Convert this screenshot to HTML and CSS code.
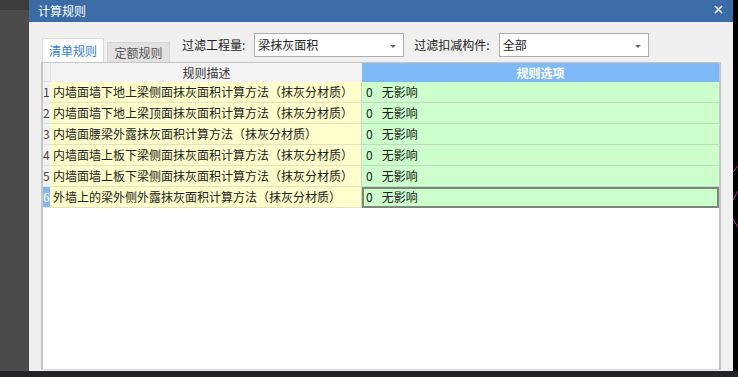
FILE: index.html
```html
<!DOCTYPE html>
<html lang="zh-CN">
<head>
    <meta charset="UTF-8">
    <title>计算规则</title>
    <link rel="stylesheet" href="styles.css">
</head>
<body>
    <div class="screen">
        <div class="main">
            <div class="desk-left"></div>

            <div class="dialog">
                <div class="titlebar">
                    <span class="title">计算规则</span>
                    <svg class="close" width="9" height="9" viewBox="0 0 9 9">
                        <path d="M1 1 L8 8 M8 1 L1 8" stroke="#fff" stroke-width="1.6" fill="none"/>
                    </svg>
                </div>

                <div class="dlg-body">
                    <div class="toolbar">
                        <div class="tabs">
                            <div class="tab active">清单规则</div>
                            <div class="tab">定额规则</div>
                        </div>
                        <div class="filter first">
                            <span class="filter-label">过滤工程量:</span>
                            <div class="combo">梁抹灰面积<span class="arrow"></span></div>
                        </div>
                        <div class="filter">
                            <span class="filter-label">过滤扣减构件:</span>
                            <div class="combo">全部<span class="arrow"></span></div>
                        </div>
                    </div>

                    <div class="grid">
                        <div class="grid-row head">
                            <div class="rh"></div>
                            <div class="hd-desc">规则描述</div>
                            <div class="hd-opt">规则选项</div>
                        </div>
                        <div class="grid-row">
                            <div class="rh">1</div>
                            <div class="desc">内墙面墙下地上梁侧面抹灰面积计算方法（抹灰分材质）</div>
                            <div class="opt">0<span class="opt-text">无影响</span></div>
                        </div>
                        <div class="grid-row">
                            <div class="rh">2</div>
                            <div class="desc">内墙面墙下地上梁顶面抹灰面积计算方法（抹灰分材质）</div>
                            <div class="opt">0<span class="opt-text">无影响</span></div>
                        </div>
                        <div class="grid-row">
                            <div class="rh">3</div>
                            <div class="desc">内墙面腰梁外露抹灰面积计算方法（抹灰分材质）</div>
                            <div class="opt">0<span class="opt-text">无影响</span></div>
                        </div>
                        <div class="grid-row">
                            <div class="rh">4</div>
                            <div class="desc">内墙面墙上板下梁侧面抹灰面积计算方法（抹灰分材质）</div>
                            <div class="opt">0<span class="opt-text">无影响</span></div>
                        </div>
                        <div class="grid-row">
                            <div class="rh">5</div>
                            <div class="desc">内墙面墙上板下梁侧面抹灰面积计算方法（抹灰分材质）</div>
                            <div class="opt">0<span class="opt-text">无影响</span></div>
                        </div>
                        <div class="grid-row current">
                            <div class="rh">6</div>
                            <div class="desc">外墙上的梁外侧外露抹灰面积计算方法（抹灰分材质）</div>
                            <div class="opt">0<span class="opt-text">无影响</span></div>
                        </div>
                    </div>
                </div>
            </div>

            <div class="desk-right">
                <svg width="5" height="371" viewBox="0 0 5 371">
                    <path d="M0 172 L5 166" stroke="#b0309a" stroke-width="1"/>
                    <path d="M0 200 L5 191" stroke="#b0309a" stroke-width="1"/>
                    <path d="M0 219 L5 227" stroke="#b0309a" stroke-width="1"/>
                </svg>
            </div>
        </div>
        <div class="taskbar"></div>
    </div>
</body>
</html>
```

FILE: styles.css
```css
body {
    margin: 0;
    padding: 0;
    background-color: #000;
    font-family: "Noto Sans CJK SC", "Microsoft YaHei", sans-serif;
    font-size: 12px;
    color: #222;
}

.screen {
    width: 738px;
    height: 377px;
    display: flex;
    flex-direction: column;
}

.main {
    display: flex;
    height: 371px;
}

.desk-left {
    width: 29px;
    background: linear-gradient(#3c3c3c 0 10px, #4b4b4b 10px);
}

.desk-right {
    width: 5px;
    background-color: #000;
}

.desk-right svg {
    display: block;
}

.taskbar {
    height: 6px;
    background-color: #25232a;
}

/* окно */
.dialog {
    width: 704px;
    display: flex;
    flex-direction: column;
    background-color: #f0f0f0;
}

.titlebar {
    height: 22px;
    background-color: #3b6ca8;
    display: flex;
    align-items: center;
    justify-content: space-between;
    padding: 0 10px 0 9px;
}

.title {
    color: #fff;
    font-size: 12px;
    line-height: 20px;
}

.close {
    display: block;
    margin-top: -3px;
}

.dlg-body {
    flex: 1;
    display: flex;
    flex-direction: column;
    padding: 0 12px 1px 12px;
}

.toolbar {
    height: 40px;
    display: flex;
}

.tabs {
    display: flex;
    align-items: flex-end;
    margin-left: 1px;
}

.tab {
    box-sizing: border-box;
    width: 63px;
    height: 20px;
    margin-left: 3px;
    text-align: center;
    line-height: 20px;
    color: #555;
    background-color: #e2e2e2;
    border: 1px solid #d6d6d6;
    border-bottom: none;
}

.tab.active {
    width: 62px;
    height: 24px;
    margin-left: 0;
    line-height: 24px;
    color: #2e7bd6;
    background-color: #fff;
    border-color: #dadada;
}

.filter {
    display: flex;
    align-items: center;
    margin-top: 11px;
    height: 24px;
    margin-left: 10px;
}

.filter.first {
    margin-left: 12px;
}

.filter-label {
    line-height: 24px;
    margin-right: 9px;
}

.combo {
    box-sizing: border-box;
    width: 150px;
    height: 24px;
    display: flex;
    align-items: center;
    justify-content: space-between;
    padding: 0 7px 0 3px;
    background-color: #fff;
    border: 1px solid #acacac;
    line-height: 22px;
}

.arrow {
    width: 0;
    height: 0;
    border-left: 3px solid transparent;
    border-right: 3px solid transparent;
    border-top: 3px solid #6a6a6a;
    margin-top: 2px;
}

/* таблица */
.grid {
    flex: 1;
    background-color: #fff;
    border: 2px solid #c6c6c6;
    border-top-width: 1px;
    border-bottom: 1px solid #d4d4d4;
}

.grid-row {
    display: grid;
    grid-template-columns: 7px 312px 357px;
    height: 21px;
}

.grid-row > div {
    box-sizing: border-box;
    white-space: nowrap;
    overflow: hidden;
    line-height: 20px;
}

.grid-row.head {
    height: 19px;
}

.grid-row.head > div {
    line-height: 19px;
    text-align: center;
}

.rh {
    background-color: #f2f2f2;
    color: #444;
    border-bottom: 1px solid #e2e2e2;
}

.hd-desc {
    background-color: #f3f3f3;
    color: #333;
    border-left: 1px solid #e4e4e4;
}

.hd-opt {
    background-color: #7ebaf7;
    color: #fff;
    font-weight: bold;
}

.desc {
    background-color: #ffffcc;
    padding-left: 3px;
    border-bottom: 1px solid #e3e3c4;
    border-right: 1px solid #d2d6bc;
}

.opt {
    background-color: #ccffcc;
    padding-left: 4px;
    border-bottom: 1px solid #bcdcbc;
}

.opt-text {
    margin-left: 9px;
}

.current .rh {
    background-color: #86b6ee;
    color: #fff;
}

.current .opt {
    box-shadow: inset 0 0 0 2px #7b897b;
    border-bottom: none;
}
```
